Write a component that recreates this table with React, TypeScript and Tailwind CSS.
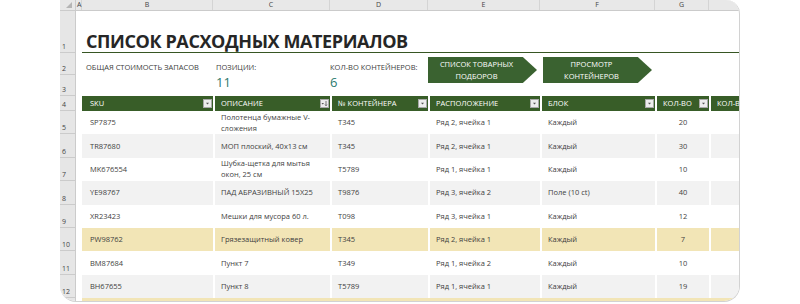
const rows = [
  { n: 5, bg: "bg-white", sku: "SP7875", desc: "Полотенца бумажные V-сложения", box: "T345", loc: "Ряд 2, ячейка 1", unit: "Каждый", qty: "20" },
  { n: 6, bg: "bg-[#f2f2f2]", sku: "TR87680", desc: "МОП плоский, 40x13 см", box: "T345", loc: "Ряд 2, ячейка 1", unit: "Каждый", qty: "30" },
  { n: 7, bg: "bg-white", sku: "MK676554", desc: "Шубка-щетка для мытья окон, 25 см", box: "T5789", loc: "Ряд 1, ячейка 1", unit: "Каждый", qty: "10" },
  { n: 8, bg: "bg-[#f2f2f2]", sku: "YE98767", desc: "ПАД АБРАЗИВНЫЙ 15X25", box: "T9876", loc: "Ряд 3, ячейка 2", unit: "Поле (10 ct)", qty: "40" },
  { n: 9, bg: "bg-white", sku: "XR23423", desc: "Мешки для мусора 60 л.", box: "T098", loc: "Ряд 3, ячейка 1", unit: "Каждый", qty: "12" },
  { n: 10, bg: "bg-[#f2e5b6]", sku: "PW98762", desc: "Грязезащитный ковер", box: "T345", loc: "Ряд 2, ячейка 1", unit: "Каждый", qty: "7" },
  { n: 11, bg: "bg-white", sku: "BM87684", desc: "Пункт 7", box: "T349", loc: "Ряд 1, ячейка 2", unit: "Каждый", qty: "10" },
  { n: 12, bg: "bg-[#f2f2f2]", sku: "BH67655", desc: "Пункт 8", box: "T5789", loc: "Ряд 1, ячейка 1", unit: "Каждый", qty: "19" },
];

const letters = [
  { l: "A", w: "w-[6px]" },
  { l: "B", w: "w-[131px]" },
  { l: "C", w: "w-[117px]" },
  { l: "D", w: "w-[98px]" },
  { l: "E", w: "w-[112px]" },
  { l: "F", w: "w-[115px]" },
  { l: "G", w: "w-[54px]" },
  { l: "", w: "w-[60px]" },
];

function RowNum({ n, h }: { n?: number; h: string }) {
  return (
    <div className={`${h} w-[16px] shrink-0 bg-[#e6e6e6] border-b border-r border-[#cbcbcb] flex items-end pl-[2px] pb-[1px] text-[7px] leading-[8px] text-[#444]`}>
      {n}
    </div>
  );
}

function FilterBtn({ sort }: { sort?: boolean }) {
  return (
    <div className="w-[9px] h-[9px] shrink-0 bg-[#ededed] border border-[#a8a8a8] flex items-center justify-center">
      <svg width="7" height="7" viewBox="0 0 7 7">
        {sort ? (
          <>
            <path d="M0.5 3 L3 3 L1.75 4.5 Z" fill="#555" />
            <path d="M5 1 V5.5 M4 4.5 L5 5.8 L6 4.5" stroke="#555" strokeWidth="0.8" fill="none" />
          </>
        ) : (
          <path d="M2 2.8 L5 2.8 L3.5 4.6 Z" fill="#555" />
        )}
      </svg>
    </div>
  );
}

function HeadCell({ w, label, first, sort, noBtn }: { w: string; label: string; first?: boolean; sort?: boolean; noBtn?: boolean }) {
  return (
    <div className={`${w} shrink-0 h-full bg-[#385d28] flex items-center justify-between pr-[1px] ${first ? "pl-[8px]" : "pl-[6px] border-l-2 border-white"}`}>
      <span className="text-white text-[7.5px] leading-none whitespace-nowrap">{label}</span>
      {!noBtn && <FilterBtn sort={sort} />}
    </div>
  );
}

function Arrow({ top, bottom }: { top: string; bottom: string }) {
  return (
    <div className="w-[109px] h-[26px] bg-[#3a6230] [clip-path:polygon(0_0,87%_0,100%_50%,87%_100%,0_100%)] flex flex-col items-center justify-center pr-[12px] text-white text-[7.5px] leading-[12px]">
      <span>{top}</span>
      <span>{bottom}</span>
    </div>
  );
}

export default function App() {
  return (
    <div className="w-[800px] h-[304px] bg-white overflow-hidden font-['Open_Sans',sans-serif] text-[#3f3f3f]">
      <div className="ml-[60px] w-[680px] h-[302px] overflow-hidden rounded-tr-[14px] rounded-b-[16px] border-r border-b border-[#d2d2d2] flex flex-col">
        {/* column letters */}
        <div className="flex h-[11px] shrink-0 bg-[#e8e8e8] border-b border-[#cbcbcb] text-[7px] text-[#444]">
          <div className="w-[16px] shrink-0 border-r border-[#cbcbcb] flex items-end justify-end pr-[3px] pb-[2px]">
            <svg width="6" height="6" viewBox="0 0 6 6">
              <path d="M6 0 L6 6 L0 6 Z" fill="#b5b5b5" />
            </svg>
          </div>
          {letters.map((c, i) => (
            <div key={i} className={`${c.w} shrink-0 flex items-center justify-center border-r border-[#d4d4d4] ${i === 0 ? "justify-start pl-[1px]" : ""}`}>
              {c.l}
            </div>
          ))}
        </div>

        {/* row 1: title */}
        <div className="flex h-[42px] shrink-0">
          <RowNum n={1} h="h-[42px]" />
          <div className="w-[6px] shrink-0" />
          <div className="flex-1 border-b-[1.5px] border-[#375623] flex items-end pl-[4px] pb-[1px]">
            <span className="text-[18px] font-bold tracking-[-0.4px] text-[#262626] leading-[20px] whitespace-nowrap">СПИСОК РАСХОДНЫХ МАТЕРИАЛОВ</span>
          </div>
        </div>

        {/* rows 2-3: summary */}
        <div className="flex h-[43px] shrink-0">
          <div className="flex flex-col">
            <RowNum n={2} h="h-[22px]" />
            <RowNum n={3} h="h-[21px]" />
          </div>
          <div className="w-[6px] shrink-0" />
          <div className="w-[131px] shrink-0 pl-[4px] pt-[9px] text-[7.5px] leading-[10px] text-[#404040]">ОБЩАЯ СТОИМОСТЬ ЗАПАСОВ</div>
          <div className="w-[117px] shrink-0 pl-[3px] pt-[9px] flex flex-col">
            <span className="text-[7.5px] leading-[10px] text-[#404040]">ПОЗИЦИИ:</span>
            <span className="text-[13px] leading-[16px] mt-[2px] text-[#2c7a6e]">11</span>
          </div>
          <div className="w-[98px] shrink-0 pt-[9px] flex flex-col">
            <span className="text-[7.5px] leading-[10px] text-[#404040] whitespace-nowrap">КОЛ-ВО КОНТЕЙНЕРОВ:</span>
            <span className="text-[13px] leading-[16px] mt-[2px] text-[#2c7a6e]">6</span>
          </div>
          <div className="w-[115px] shrink-0 pt-[4px]">
            <Arrow top="СПИСОК ТОВАРНЫХ" bottom="ПОДБОРОВ" />
          </div>
          <div className="w-[115px] shrink-0 pt-[4px]">
            <Arrow top="ПРОСМОТР" bottom="КОНТЕЙНЕРОВ" />
          </div>
        </div>

        {/* row 4: table header */}
        <div className="flex h-[15px] shrink-0">
          <RowNum n={4} h="h-[15px]" />
          <div className="w-[6px] shrink-0" />
          <HeadCell w="w-[131px]" label="SKU" first />
          <HeadCell w="w-[117px]" label="ОПИСАНИЕ" sort />
          <HeadCell w="w-[98px]" label="№ КОНТЕЙНЕРА" />
          <HeadCell w="w-[112px]" label="РАСПОЛОЖЕНИЕ" />
          <HeadCell w="w-[115px]" label="БЛОК" />
          <HeadCell w="w-[54px]" label="КОЛ-ВО" />
          <HeadCell w="w-[60px]" label="КОЛ-ВО В" noBtn />
        </div>

        {/* data rows */}
        {rows.map((r) => (
          <div key={r.n} className="flex h-[23.4px] shrink-0 text-[7.5px] leading-[11px]">
            <RowNum n={r.n} h="h-[23.4px]" />
            <div className="w-[6px] shrink-0 bg-white" />
            <div className={`w-[131px] shrink-0 ${r.bg} pl-[8px] flex items-center`}>{r.sku}</div>
            <div className={`w-[117px] shrink-0 ${r.bg} border-l-2 border-white px-[6px] flex items-center`}>{r.desc}</div>
            <div className={`w-[98px] shrink-0 ${r.bg} border-l-2 border-white px-[6px] flex items-center`}>{r.box}</div>
            <div className={`w-[112px] shrink-0 ${r.bg} border-l-2 border-white px-[6px] flex items-center`}>{r.loc}</div>
            <div className={`w-[115px] shrink-0 ${r.bg} border-l-2 border-white px-[6px] flex items-center`}>{r.unit}</div>
            <div className={`w-[54px] shrink-0 ${r.bg} border-l-2 border-white flex items-center justify-center`}>{r.qty}</div>
            <div className={`w-[60px] shrink-0 ${r.bg} border-l-2 border-white`} />
          </div>
        ))}

        {/* row 13 (cut off) */}
        <div className="flex h-[20px] shrink-0">
          <RowNum h="h-[20px]" />
          <div className="w-[6px] shrink-0 bg-white" />
          <div className="flex-1 bg-[#f2e5b6]" />
        </div>
      </div>
    </div>
  );
}
